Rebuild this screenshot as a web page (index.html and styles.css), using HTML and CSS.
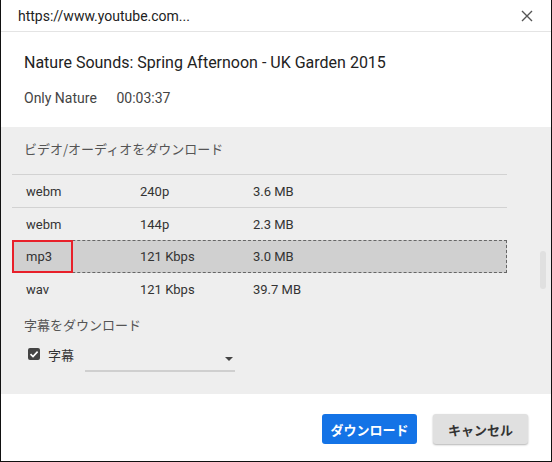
FILE: index.html
```html
<!DOCTYPE html>
<html lang="ja">

<head>
  <meta charset="UTF-8" />
  <meta name="viewport" content="width=device-width, initial-scale=1.0" />
  <title>ダウンロード</title>
  <link rel="stylesheet" href="styles.css">
</head>

<body>
  <div class="dialog">
    <div class="top-bar">
      <div class="url">https://www.youtube.com...</div>
      <svg class="close" width="12" height="12" viewBox="0 0 12 12">
        <path d="M1 1 L11 11 M11 1 L1 11" stroke="#555" stroke-width="1.4" fill="none" />
      </svg>
    </div>

    <div class="info">
      <div class="title">Nature Sounds: Spring Afternoon - UK Garden 2015</div>
      <div class="meta">
        <span class="channel">Only Nature</span>
        <span>00:03:37</span>
      </div>
    </div>

    <div class="options">
      <div class="section-label">ビデオ/オーディオをダウンロード</div>

      <div class="formats">
        <div class="row">
          <span class="c1">webm</span><span class="c2">240p</span><span>3.6 MB</span>
        </div>
        <div class="row">
          <span class="c1">webm</span><span class="c2">144p</span><span>2.3 MB</span>
        </div>
        <div class="row selected">
          <span class="c1 mark">mp3</span><span class="c2">121 Kbps</span><span>3.0 MB</span>
        </div>
        <div class="row last">
          <span class="c1">wav</span><span class="c2">121 Kbps</span><span>39.7 MB</span>
        </div>
      </div>

      <div class="section-label sub">字幕をダウンロード</div>

      <div class="subs">
        <span class="check">
          <svg width="12" height="12" viewBox="0 0 12 12">
            <path d="M2.5 6.2 L5 8.6 L9.6 3.6" stroke="#fff" stroke-width="1.6" fill="none" />
          </svg>
        </span>
        <span class="subs-label">字幕</span>
        <div class="select">
          <span class="arrow"></span>
        </div>
      </div>

      <div class="scrollbar"></div>
    </div>

    <div class="footer">
      <button class="btn primary">ダウンロード</button>
      <button class="btn">キャンセル</button>
    </div>
  </div>
</body>

</html>
```

FILE: styles.css
```css
body {
  margin: 0;
  font-family: Roboto, "Noto Sans CJK JP", sans-serif;
  color: #333;
  background: #fff;
}

.dialog {
  width: 550px;
  height: 461px;
  border: 1px solid #111;
  border-top: none;
  display: flex;
  flex-direction: column;
}

.top-bar {
  height: 31px;
  border-bottom: 1px solid #e4e4e4;
  display: flex;
  justify-content: space-between;
  align-items: center;
  padding: 0 18px 0 17px;
}

.url {
  font-size: 14px;
  color: #222;
}

.info {
  padding: 21px 23px 0;
  height: 74px;
}

.title {
  font-size: 16px;
  color: #222;
}

.meta {
  margin-top: 18px;
  font-size: 14px;
  color: #444;
}

.channel {
  display: inline-block;
  width: 89px;
}

.options {
  position: relative;
  box-sizing: border-box;
  background: #eeeeee;
  height: 267px;
  padding: 11px 44px 0 11px;
}

.section-label {
  font-family: "Noto Sans CJK JP", sans-serif;
  font-size: 13px;
  color: #555;
  padding-left: 12px;
  height: 21px;
  line-height: 21px;
}

.section-label.sub {
  margin-top: 9px;
}

.formats {
  margin-top: 15px;
}

.row {
  display: flex;
  align-items: center;
  height: 32px;
  border-top: 1px solid #d2d2d2;
  font-size: 13px;
  color: #333;
}

.row.last {
  border-top: none;
}

.row span {
  padding-left: 14px;
}

.c1 {
  width: 100px;
}

.c2 {
  width: 99px;
}

.row.selected {
  position: relative;
  background: #d0d0d0;
  outline: 1px dashed #666;
  outline-offset: -1px;
  border-top: none;
  height: 33px;
}

.mark {
  position: relative;
  align-self: stretch;
  display: flex;
  align-items: center;
  box-sizing: border-box;
  width: 61px;
  margin-right: 53px;
  border: 2px solid #e8202a;
  background: #d0d0d0;
  padding-left: 12px !important;
}

.subs {
  display: flex;
  align-items: center;
  margin-top: 1px;
  padding-left: 16px;
}

.check {
  width: 12px;
  height: 12px;
  background: #444;
  border-radius: 2px;
  display: flex;
}

.subs-label {
  font-family: "Noto Sans CJK JP", sans-serif;
  font-size: 13px;
  color: #333;
  margin-left: 8px;
  width: 37px;
}

.select {
  position: relative;
  width: 150px;
  height: 20px;
  border-bottom: 2px solid #cfcfcf;
  margin-top: 14px;
}

.arrow {
  position: absolute;
  right: 2px;
  top: 7px;
  border-left: 4px solid transparent;
  border-right: 4px solid transparent;
  border-top: 4px solid #444;
}

.scrollbar {
  position: absolute;
  right: 5px;
  top: 124px;
  width: 6px;
  height: 38px;
  border-radius: 3px;
  background: #e0e0e0;
}

.footer {
  flex: 1;
  display: flex;
  justify-content: flex-end;
  align-items: center;
  gap: 16px;
  padding-right: 23px;
}

.btn {
  width: 95px;
  height: 30px;
  border: none;
  border-radius: 3px;
  font-family: "Noto Sans CJK JP", sans-serif;
  font-size: 13px;
  font-weight: bold;
  color: #333;
  background: #e0e0e0;
  box-shadow: 0 1px 2px rgba(0, 0, 0, 0.3);
  margin-top: 3px;
}

.btn.primary {
  background: #1473e6;
  color: #fff;
  box-shadow: none;
}
```
